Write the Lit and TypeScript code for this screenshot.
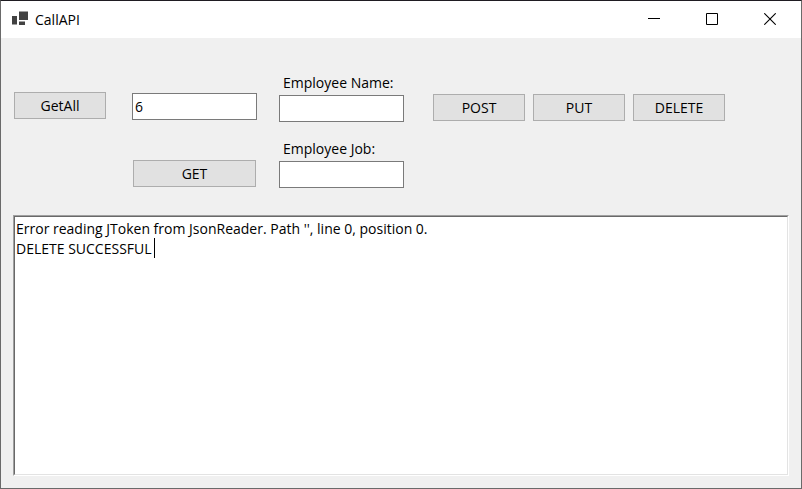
import { LitElement, html, css } from "lit";
import { customElement, state } from "lit/decorators.js";

@customElement("app-root")
export class AppRoot extends LitElement {
  static styles = css`
    :host {
      display: flex;
      flex-direction: column;
      box-sizing: border-box;
      min-height: 100vh;
      border: 1px solid #6a6a6a;
      border-top-color: #1f1c22;
      background: #f0f0f0;
      color: #000;
      font: 14px/20px "Open Sans", "Noto Sans", sans-serif;
    }
    * {
      box-sizing: border-box;
    }
    .titlebar {
      display: flex;
      align-items: center;
      height: 37px;
      padding: 0 2px 0 10px;
      background: #fff;
    }
    .logo {
      display: block;
      margin-right: 6px;
    }
    .title {
      flex: 1;
      margin: 0;
      font: inherit;
    }
    .caption-button {
      display: grid;
      align-self: flex-start;
      place-items: center;
      width: 58px;
      height: 36px;
      padding: 0;
      border: 0;
      background: transparent;
    }
    .caption-button:hover {
      background: #e5e5e5;
    }
    .client {
      flex: 1;
      display: flex;
      flex-direction: column;
      gap: 27px;
      padding: 34px 12px 12px;
    }
    .toolbar {
      display: flex;
      align-items: flex-start;
    }
    .all {
      padding: 20px 26px 0 1px;
    }
    .lookup {
      display: flex;
      flex-direction: column;
      gap: 40px;
      padding: 21px 22px 0 0;
    }
    .fields {
      display: flex;
      flex-direction: column;
      gap: 16px;
      padding-right: 29px;
    }
    .field {
      display: flex;
      flex-direction: column;
      gap: 2px;
    }
    .label {
      padding: 1px 0 0 4px;
    }
    .actions {
      display: flex;
      gap: 8px;
      padding-top: 22px;
    }
    .button {
      width: 92px;
      height: 27px;
      padding: 0;
      border: 1px solid #adadad;
      background: #e1e1e1;
      color: inherit;
      font: inherit;
    }
    .button:hover {
      border-color: #0078d7;
      background: #e5f1fb;
    }
    .lookup .button {
      width: auto;
      margin: 0 1px;
    }
    .input {
      width: 125px;
      height: 27px;
      padding: 0 2px;
      border: 1px solid #7a7a7a;
      border-radius: 0;
      background: #fff;
      color: inherit;
      font: inherit;
    }
    .output {
      position: relative;
      flex: 1;
      display: flex;
      border: 1px solid;
      border-color: #a0a0a0 #fff #fff #a0a0a0;
    }
    .log {
      flex: 1;
      min-width: 0;
      padding: 2px 1px;
      border: 1px solid;
      border-color: #696969 #e3e3e3 #e3e3e3 #696969;
      border-radius: 0;
      outline: 0;
      resize: none;
      background: #fff;
      color: inherit;
      font: inherit;
    }
    .caret {
      position: absolute;
      top: 22px;
      left: 140px;
      width: 1px;
      height: 20px;
      background: #000;
    }
  `;

  @state() private log =
    "Error reading JToken from JsonReader. Path '', line 0, position 0.\nDELETE SUCCESSFUL";

  render() {
    return html`
      <header class="titlebar">
        <svg class="logo" width="18" height="17" viewBox="0 0 18 17" aria-hidden="true">
          <path d="M8 .5h9v8.5H8zM1 5h5v8.5H1zM8 10.5h6v3.5H8z" fill="#424242" />
        </svg>
        <h1 class="title">CallAPI</h1>
        <button class="caption-button" aria-label="Minimize">
          <svg width="12" height="12" viewBox="0 0 12 12"><path d="M0 5h12v1H0z" /></svg>
        </button>
        <button class="caption-button" aria-label="Maximize">
          <svg width="12" height="12" viewBox="0 0 12 12">
            <path d="M.5.5h11v11H.5z" fill="none" stroke="#000" />
          </svg>
        </button>
        <button class="caption-button" aria-label="Close">
          <svg width="12" height="12" viewBox="0 0 12 12">
            <path d="M.3.3l11.4 11.4M11.7.3L.3 11.7" fill="none" stroke="#000" stroke-width="1.1" />
          </svg>
        </button>
      </header>
      <main class="client">
        <div class="toolbar">
          <div class="all"><button class="button">GetAll</button></div>
          <div class="lookup">
            <input class="input" aria-label="Employee ID" value="6" />
            <button class="button">GET</button>
          </div>
          <div class="fields">
            <div class="field">
              <label class="label" for="name">Employee Name:</label>
              <input class="input" id="name" />
            </div>
            <div class="field">
              <label class="label" for="job">Employee Job:</label>
              <input class="input" id="job" />
            </div>
          </div>
          <div class="actions">
            ${["POST", "PUT", "DELETE"].map((m) => html`<button class="button">${m}</button>`)}
          </div>
        </div>
        <div class="output">
          <textarea class="log" aria-label="Response" spellcheck="false" .value=${this.log}></textarea>
          <span class="caret"></span>
        </div>
      </main>
    `;
  }
}
